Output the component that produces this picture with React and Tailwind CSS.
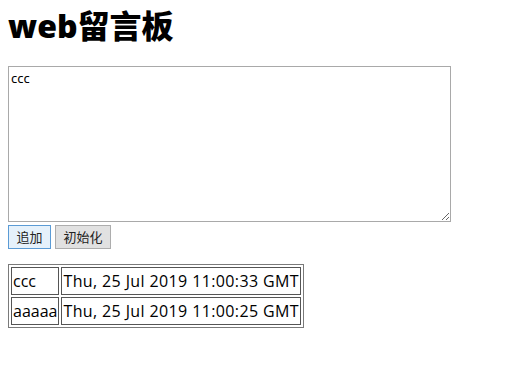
const messages = [
  { text: "ccc", time: "Thu, 25 Jul 2019 11:00:33 GMT" },
  { text: "aaaaa", time: "Thu, 25 Jul 2019 11:00:25 GMT" },
]

const cjk = "font-['Segoe_UI','Open_Sans','Noto_Sans_CJK_SC',sans-serif]"

export default function App() {
  return (
    <div className={`min-h-[368px] bg-white px-2 text-black ${cjk}`}>
      <h1 className="pt-[4px] text-[32px] font-extrabold leading-[44px]">web留言板</h1>
      <div className="mt-[18px] flex flex-col items-start">
        <textarea
          defaultValue="ccc"
          className="h-[156px] w-[443px] resize border border-[#a9a9a9] px-[2px] py-[3px] text-[13px] leading-[16px] outline-none font-['Noto_Sans','Noto_Sans_CJK_SC',sans-serif]"
        />
        <div className="mt-[3px] flex gap-[4px]">
          <button className="h-[24px] w-[43px] border border-[#5b9bd5] bg-[#e5f1fb] text-[13px] leading-none text-[#222]">追加</button>
          <button className="h-[24px] w-[56px] border border-[#adadad] bg-[#e1e1e1] text-[13px] leading-none text-[#222]">初始化</button>
        </div>
        <table className="mt-[15px] border-separate border-spacing-[2px] border border-[#7a7a7a] text-[16px] text-black">
          <tbody>
            {messages.map((m) => (
              <tr key={m.time}>
                <td className="h-[28px] border border-[#555] px-[1px] py-0 leading-[24px]">{m.text}</td>
                <td className="h-[28px] border border-[#555] px-[1px] py-0 leading-[24px] tracking-[0.38px] whitespace-nowrap">{m.time}</td>
              </tr>
            ))}
          </tbody>
        </table>
      </div>
    </div>
  )
}
